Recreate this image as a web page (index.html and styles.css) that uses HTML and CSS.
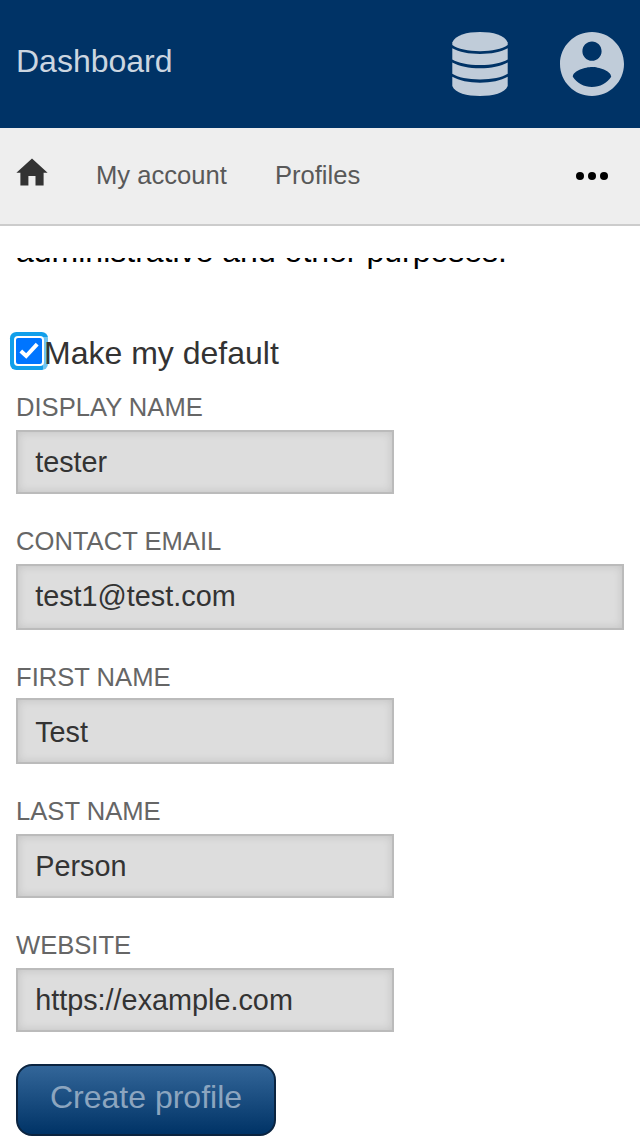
FILE: index.html
```html
<!DOCTYPE html>
<html lang="en">
<head>
<meta charset="utf-8">
<title>Dashboard</title>
<link rel="stylesheet" href="styles.css">
</head>
<body>
<header class="topbar">
  <span class="title">Dashboard</span>
  <svg class="db" width="56" height="64" viewBox="0 0 56 64"><path d="M.3 10.500C3 3 15 0 28 0S53 3 55.700 10.500V13C50 17 40 19.200 28 19.200S6 17 .3 13Z"/><path d="M.3 16.300C7 20 17 22 28 22S49 20 55.700 16.300V27.500C50 31 40 33 28 33S6 31 .3 27.500Z"/><path d="M.3 30.400C7 34.200 17 36.300 28 36.300S49 34.200 55.700 30.400V41.800C50 45.500 40 47.400 28 47.400S6 45.500 .3 41.800Z"/><path d="M.3 44.800C7 48.600 17 50.700 28 50.700S49 48.600 55.700 44.800V54C53 61 41 64 28 64S3 61 .3 54Z"/></svg>
  <svg class="user" width="64" height="64" viewBox="2 2 20 20"><path d="M12 2C6.480 2 2 6.480 2 12s4.480 10 10 10 10-4.480 10-10S17.520 2 12 2zm0 3c1.660 0 3 1.340 3 3s-1.340 3-3 3-3-1.340-3-3 1.340-3 3-3zm0 14.200c-2.500 0-4.710-1.280-6-3.220.030-1.990 4-3.080 6-3.080 1.990 0 5.970 1.090 6 3.080-1.290 1.940-3.500 3.220-6 3.220z"/></svg>
</header>
<nav class="nav">
  <svg class="home" width="32" height="28" viewBox="0 0 32 28"><path d="M16 .4L31.600 14.700H27.600V27.600H19.500V18H12.400V27.600H4.400V14.700H.4Z"/></svg>
  <a class="account">My account</a>
  <a>Profiles</a>
  <svg class="more" width="32" height="8" viewBox="0 0 32 8"><circle cx="4" cy="4" r="4"/><circle cx="16" cy="4" r="4"/><circle cx="28" cy="4" r="4"/></svg>
</nav>
<main class="content">
  <div class="clip"><p class="intro">administrative and other purposes.</p></div>
  <label class="default"><span class="check"><svg width="26" height="26" viewBox="0 0 26 26"><path d="M4.800 13L10.200 18L21.200 6.200" fill="none" stroke="#fff" stroke-width="4"/></svg></span><span class="check-text">Make my default</span></label>
  <div class="field"><label class="label">DISPLAY NAME</label><div class="input">tester</div></div>
  <div class="field"><label class="label">CONTACT EMAIL</label><div class="input wide tall">test1@test.com</div></div>
  <div class="field tight"><label class="label">FIRST NAME</label><div class="input tall low">Test</div></div>
  <div class="field"><label class="label">LAST NAME</label><div class="input">Person</div></div>
  <div class="field"><label class="label">WEBSITE</label><div class="input">https://example.com</div></div>
  <button class="submit"><span>Create profile</span></button>
</main>
</body>
</html>
```
FILE: styles.css
```css
* { box-sizing: border-box; }
body {
  margin: 0;
  height: 1136px;
  overflow: hidden;
  background: #fff;
  color: #333;
  font-family: "Liberation Sans", Arial, sans-serif;
  font-size: 32px;
}
svg { display: block; flex: none; }
.topbar {
  display: flex;
  align-items: center;
  height: 128px;
  padding: 0 16px;
  background: #003366;
  fill: #c0ccd9;
}
.title { color: #ccd6e0; line-height: 36px; padding-bottom: 7px; }
.db { margin-left: auto; }
.user { margin-left: 52px; }
.nav {
  display: flex;
  align-items: center;
  height: 98px;
  padding: 0 32px 0 16px;
  background: #eee;
  border-bottom: 2px solid #ccc;
  color: #595959;
  font-size: 25.6px;
  line-height: 30px;
}
.nav a { padding-bottom: 3px; }
.home { fill: #333; margin-bottom: 8px; }
.nav .account { margin: 0 48px; }
.more { fill: #000; margin-left: auto; }
.content { padding: 32px 16px 0; }
.clip {
  display: flex;
  align-items: flex-end;
  height: 14px;
  overflow: hidden;
}
.intro { margin: 0; color: #000; line-height: 36px; padding-bottom: 3px; }
.default {
  display: flex;
  align-items: flex-start;
  height: 60px;
  margin-top: 62px;
}
.check {
  flex: none;
  width: 26px;
  height: 26px;
  margin-top: 4px;
  border-radius: 2px;
  background: #0075ff;
  box-shadow: 0 0 0 2px #fff, 0 0 0 6px #129fea;
}
.check-text {
  position: relative;
  height: 34px;
  margin: 3px 0 0 1px;
  padding-left: 1px;
  line-height: 32px;
  background: rgba(255, 255, 255, .4);
}
.field { margin-bottom: 34px; }
.label {
  display: block;
  height: 36px;
  color: #666;
  font-size: 25.6px;
  line-height: 26px;
}
.tight .label { height: 34px; }
.input {
  width: 378px;
  height: 64px;
  padding-left: 17.200px;
  border: 2px solid #bbb;
  background: #ddd;
  box-shadow: inset 0 0 10px rgba(0, 0, 0, .12);
  font-size: 28.8px;
  line-height: 60px;
}
.wide { width: 100%; }
.tall { height: 66px; }
.low { line-height: 64px; }
.submit {
  display: block;
  width: 260px;
  height: 72px;
  margin-top: -2px;
  padding: 0 0 6px;
  border: 2px solid #0b2440;
  border-radius: 16px;
  background: linear-gradient(#336699, #003366);
  color: #8ca5bf;
  font: inherit;
}
```
